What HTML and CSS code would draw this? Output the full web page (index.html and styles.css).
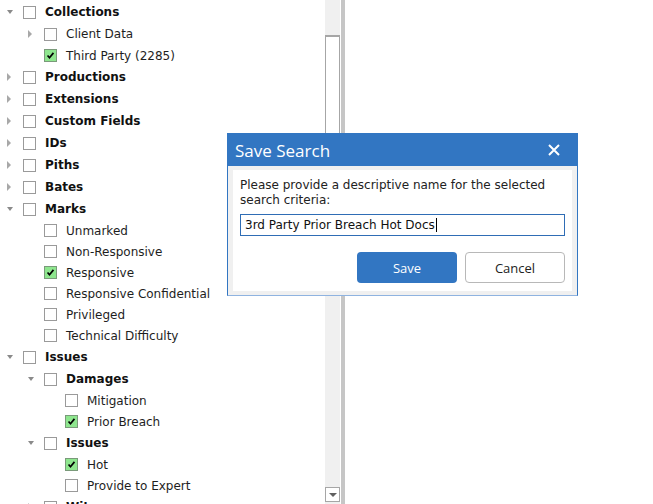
FILE: index.html
```html
<!DOCTYPE html>
<html>
<head>
<meta charset="utf-8">
<link rel="stylesheet" href="styles.css">
</head>
<body>
<div class="page">
  <div class="tree">
    <div class="row parent l1"><span class="arrow open"></span><span class="cb"></span><span class="lbl b">Collections</span></div>
    <div class="row parent l2"><span class="arrow closed"></span><span class="cb"></span><span class="lbl">Client Data</span></div>
    <div class="row leaf l2"><span class="arrow"></span><span class="cb on"><svg viewBox="0 0 13 13"><path d="M3 6.5 L5.3 9.2 L10 3.4"/></svg></span><span class="lbl">Third Party (2285)</span></div>
    <div class="row parent l1"><span class="arrow closed"></span><span class="cb"></span><span class="lbl b">Productions</span></div>
    <div class="row parent l1"><span class="arrow closed"></span><span class="cb"></span><span class="lbl b">Extensions</span></div>
    <div class="row parent l1"><span class="arrow closed"></span><span class="cb"></span><span class="lbl b">Custom Fields</span></div>
    <div class="row parent l1"><span class="arrow closed"></span><span class="cb"></span><span class="lbl b">IDs</span></div>
    <div class="row parent l1"><span class="arrow closed"></span><span class="cb"></span><span class="lbl b">Piths</span></div>
    <div class="row parent l1"><span class="arrow closed"></span><span class="cb"></span><span class="lbl b">Bates</span></div>
    <div class="row parent l1"><span class="arrow open"></span><span class="cb"></span><span class="lbl b">Marks</span></div>
    <div class="row leaf l2"><span class="arrow"></span><span class="cb"></span><span class="lbl">Unmarked</span></div>
    <div class="row leaf l2"><span class="arrow"></span><span class="cb"></span><span class="lbl">Non-Responsive</span></div>
    <div class="row leaf l2"><span class="arrow"></span><span class="cb on"><svg viewBox="0 0 13 13"><path d="M3 6.5 L5.3 9.2 L10 3.4"/></svg></span><span class="lbl">Responsive</span></div>
    <div class="row leaf l2"><span class="arrow"></span><span class="cb"></span><span class="lbl">Responsive Confidential</span></div>
    <div class="row leaf l2"><span class="arrow"></span><span class="cb"></span><span class="lbl">Privileged</span></div>
    <div class="row leaf l2"><span class="arrow"></span><span class="cb"></span><span class="lbl">Technical Difficulty</span></div>
    <div class="row parent l1"><span class="arrow open"></span><span class="cb"></span><span class="lbl b">Issues</span></div>
    <div class="row parent l2"><span class="arrow open"></span><span class="cb"></span><span class="lbl b">Damages</span></div>
    <div class="row leaf l3"><span class="arrow"></span><span class="cb"></span><span class="lbl">Mitigation</span></div>
    <div class="row leaf l3"><span class="arrow"></span><span class="cb on"><svg viewBox="0 0 13 13"><path d="M3 6.5 L5.3 9.2 L10 3.4"/></svg></span><span class="lbl">Prior Breach</span></div>
    <div class="row parent l2"><span class="arrow open"></span><span class="cb"></span><span class="lbl b">Issues</span></div>
    <div class="row leaf l3"><span class="arrow"></span><span class="cb on"><svg viewBox="0 0 13 13"><path d="M3 6.5 L5.3 9.2 L10 3.4"/></svg></span><span class="lbl">Hot</span></div>
    <div class="row leaf l3"><span class="arrow"></span><span class="cb"></span><span class="lbl">Provide to Expert</span></div>
    <div class="row parent l2"><span class="arrow closed"></span><span class="cb"></span><span class="lbl b">Witnesses</span></div>
  </div>
  <div class="scrollbar">
    <div class="thumb"></div>
    <div class="sbtn"><span class="sarrow"></span></div>
  </div>
  <div class="gap"></div>
  <div class="divider"></div>
  <div class="main"></div>
</div>

<div class="dialog">
  <div class="titlebar">
    <span class="title">Save Search</span>
    <svg class="close" viewBox="0 0 12 12"><path d="M1 1 L11 11 M11 1 L1 11"/></svg>
  </div>
  <div class="dbody">
    <div class="inner">
      <p class="msg">Please provide a descriptive name for the selected search criteria:</p>
      <div class="input"><span>3rd Party Prior Breach Hot Docs</span><span class="caret"></span></div>
      <div class="buttons">
        <div class="btn primary">Save</div>
        <div class="btn secondary">Cancel</div>
      </div>
    </div>
  </div>
</div>
</body>
</html>
```

FILE: styles.css
```css
html, body {
  margin: 0;
  padding: 0;
  background: #ffffff;
  font-family: "DejaVu Sans", Verdana, sans-serif;
  font-size: 12px;
  color: #1a1a1a;
}
.page {
  display: flex;
  height: 504px;
  overflow: hidden;
}
.tree {
  width: 325px;
  flex: none;
  overflow: hidden;
  padding-top: 1px;
  box-sizing: border-box;
}
.row {
  display: flex;
  align-items: center;
  white-space: nowrap;
}
.row.parent { height: 22px; }
.row.leaf { height: 21px; }
.row.l1 { padding-left: 3px; }
.row.l2 { padding-left: 24px; }
.row.l3 { padding-left: 45px; }
.arrow {
  width: 14px;
  height: 10px;
  flex: none;
  margin-right: 6px;
  position: relative;
}
.arrow.closed::before {
  content: "";
  position: absolute;
  left: 4px;
  top: 1px;
  border-left: 4px solid #a8a8a8;
  border-top: 4px solid transparent;
  border-bottom: 4px solid transparent;
}
.arrow.open::before {
  content: "";
  position: absolute;
  left: 4px;
  top: 3px;
  border-top: 4px solid #8a8a8a;
  border-left: 3.5px solid transparent;
  border-right: 3.5px solid transparent;
}
.cb {
  width: 11px;
  height: 11px;
  flex: none;
  border: 1px solid #9a9a9a;
  background: #ffffff;
  margin-right: 9px;
  display: flex;
}
.cb.on {
  background: #8ee68e;
  border-color: #7a9a7a;
}
.cb svg {
  width: 11px;
  height: 11px;
}
.cb svg path {
  fill: none;
  stroke: #000;
  stroke-width: 2;
}
.lbl { color: #1e1e1e; }
.lbl.b { font-weight: bold; color: #111; }

.scrollbar {
  width: 15px;
  flex: none;
  background: #f0f0f0;
  display: flex;
  flex-direction: column;
  padding-top: 35px;
  padding-bottom: 2px;
  box-sizing: border-box;
}
.thumb {
  height: 195px;
  border: 1px solid #a6a6a6;
  border-top: 2px solid #a6a6a6;
  background: #ffffff;
}
.sbtn {
  margin-top: auto;
  height: 13px;
  border: 1px solid #a6a6a6;
  background: #ffffff;
  display: flex;
  align-items: center;
  justify-content: center;
}
.sarrow {
  width: 0;
  height: 0;
  border-top: 4px solid #606060;
  border-left: 4px solid transparent;
  border-right: 4px solid transparent;
}
.gap { width: 1px; flex: none; background: #fff; }
.divider { width: 4px; flex: none; background: #c6c6c6; }
.main { flex: 1; background: #ffffff; }

.dialog {
  position: absolute;
  left: 227px;
  top: 133px;
  width: 349px;
  border: 1px solid #3276c2;
  border-bottom-color: #8fb3e0;
  background: #f0f0f0;
}
.titlebar {
  height: 32px;
  background: #3276c2;
  display: flex;
  align-items: center;
  padding-left: 7px;
  padding-right: 17px;
}
.title {
  font-family: "Open Sans", "Noto Sans", sans-serif;
  font-size: 17px;
  color: #ffffff;
  flex: 1;
}
.close {
  width: 12px;
  height: 12px;
}
.close path {
  stroke: #ffffff;
  stroke-width: 2;
  fill: none;
}
.dbody {
  padding: 4px 5px 4px 5px;
}
.inner {
  background: #ffffff;
  padding: 8px 7px 8px 7px;
}
.msg {
  margin: 0;
  line-height: 15px;
  color: #222;
}
.input {
  margin-top: 6px;
  height: 20px;
  border: 1px solid #2f6db5;
  display: flex;
  align-items: center;
  padding-left: 4px;
  color: #111;
}
.caret {
  width: 1px;
  height: 14px;
  background: #000;
  margin-left: 1px;
}
.buttons {
  margin-top: 16px;
  display: flex;
  justify-content: flex-end;
  gap: 8px;
}
.btn {
  width: 100px;
  height: 31px;
  box-sizing: border-box;
  border-radius: 4px;
  display: flex;
  align-items: center;
  justify-content: center;
  font-family: "Open Sans", "Noto Sans", sans-serif;
  font-size: 13px;
}
.btn.primary {
  background: #3276c2;
  color: #ffffff;
}
.btn.secondary {
  background: #ffffff;
  border: 1px solid #b8b8b8;
  color: #222;
}
```
